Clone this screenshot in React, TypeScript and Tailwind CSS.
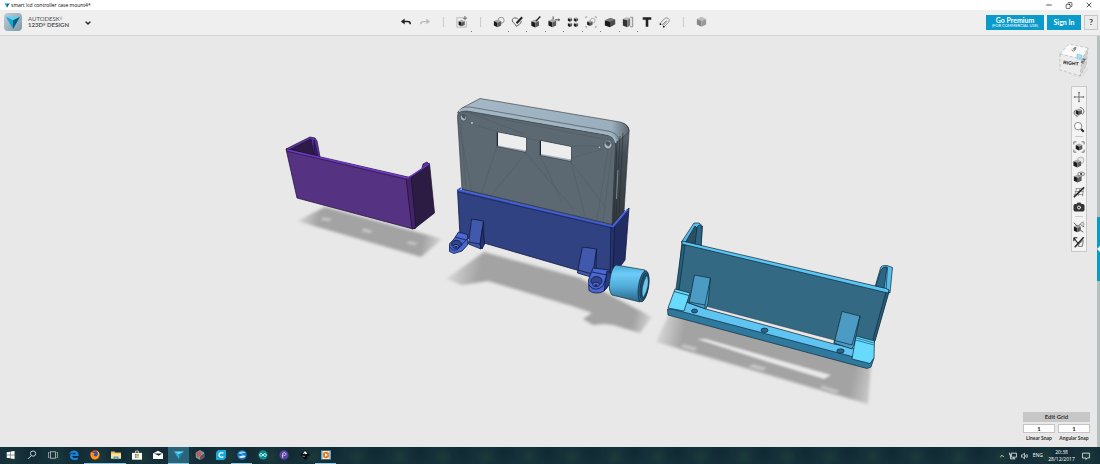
import { useState } from 'react'
import type { ReactNode } from 'react'
import { Camera, ChevronDown, ChevronUp, Copy, Minus, X } from 'lucide-react'

function Logo({ className }: { className: string }) {
  return (
    <svg viewBox="0 0 18 18" className={className}>
      <path d="M1 3 L9 6 L9 17 Z" fill="#1aa3d0" />
      <path d="M17 3 L9 6 L9 17 Z" fill="#075a86" />
      <path d="M1 3 L17 3 L9 7 Z" fill="#5fd0ee" />
    </svg>
  )
}

function Cube({ x = 1, y = 4, s = 1, light = false }: { x?: number; y?: number; s?: number; light?: boolean }) {
  return (
    <g transform={`translate(${x} ${y}) scale(${s})`} stroke="none">
      <path d="M0 2 L4.500 0 L9 2 L4.500 4 Z" fill={light ? '#bdbdbd' : '#aaa'} />
      <path d="M0 2 L4.500 4 L4.500 9.500 L0 7.500 Z" fill={light ? '#858585' : '#1c1c1c'} />
      <path d="M9 2 L4.500 4 L4.500 9.500 L9 7.500 Z" fill={light ? '#999' : '#5c5c5c'} />
    </g>
  )
}

function Icon({ children }: { children: ReactNode }) {
  return (
    <svg viewBox="0 0 14 14" className="h-3 w-3" fill="none" stroke="#222" strokeWidth="1">
      {children}
    </svg>
  )
}

type Tool = { name: string; menu?: boolean; icon?: ReactNode }

const TOOLS: Tool[] = [
  {
    name: 'Undo',
    icon: (
      <Icon>
        <path d="M3 6.500 H9 Q12 6.500 12 9.500" strokeWidth="1.700" />
        <path d="M1 6.500 L5.500 3 V10 Z" fill="#222" stroke="none" />
      </Icon>
    ),
  },
  {
    name: 'Redo',
    icon: (
      <Icon>
        <path d="M11 6.500 H5 Q2 6.500 2 9.500" stroke="#bdbdbd" strokeWidth="1.500" />
        <path d="M13 6.500 L8.500 3 V10 Z" fill="#bdbdbd" stroke="none" />
      </Icon>
    ),
  },
  { name: 'sep' },
  {
    name: 'Transform',
    menu: true,
    icon: (
      <Icon>
        <path d="M8 2 H1 V13 H12 V6" stroke="#999" strokeWidth=".7" />
        <path d="M10.500 0 V5 M8 2.500 H13" stroke="#555" />
        <Cube x={3} y={4.5} s={0.8} />
      </Icon>
    ),
  },
  { name: 'sep' },
  {
    name: 'Primitives',
    menu: true,
    icon: (
      <Icon>
        <circle cx="9.500" cy="5" r="3.500" stroke="#888" />
        <Cube x={1} y={4} s={0.95} />
      </Icon>
    ),
  },
  {
    name: 'Sketch',
    menu: true,
    icon: (
      <Icon>
        <path d="M8 3.500 C4 0 0 4 2 7 C3 8 5 9 6 12 C8 11 12 9 12 6" stroke="#444" />
        <path d="M6.500 8.500 L13 1.500" strokeWidth="2.400" />
      </Icon>
    ),
  },
  {
    name: 'Construct',
    menu: true,
    icon: (
      <Icon>
        <Cube x={1.5} y={4} />
        <path d="M7 6 L12 0.500" strokeWidth="1.600" />
      </Icon>
    ),
  },
  {
    name: 'Modify',
    menu: true,
    icon: (
      <Icon>
        <Cube x={0.5} y={3.5} />
        <path d="M8 4.500 H13.500 M6 0.500 V4 M12 3 L13.500 4.500 L12 6" stroke="#333" />
      </Icon>
    ),
  },
  {
    name: 'Pattern',
    menu: true,
    icon: (
      <Icon>
        <Cube x={1} y={1.5} s={0.55} />
        <Cube x={8} y={1.5} s={0.55} />
        <Cube x={1} y={7.5} s={0.55} />
        <Cube x={8} y={7.5} s={0.55} />
      </Icon>
    ),
  },
  {
    name: 'Grouping',
    menu: true,
    icon: (
      <Icon>
        <path d="M1 2.500 V1 H2.500 M11.500 1 H13 V2.500 M13 11.500 V13 H11.500 M2.500 13 H1 V11.500" stroke="#777" strokeWidth=".8" />
        <circle cx="9" cy="5.500" r="2.800" stroke="#999" strokeWidth=".8" />
        <Cube x={2.5} y={5} s={0.7} />
      </Icon>
    ),
  },
  {
    name: 'Combine',
    menu: true,
    icon: (
      <Icon>
        <path d="M2 4.500 L7.500 2 L13 4 V9 L8 12" fill="#777" stroke="none" />
        <path d="M1 5 L7 7 V13 L1 11 Z" fill="#1c1c1c" stroke="none" />
        <path d="M13 4 L7 7 V13 L13 9.500 Z" fill="#4a4a4a" stroke="none" />
      </Icon>
    ),
  },
  {
    name: 'Measure',
    menu: true,
    icon: (
      <Icon>
        <path d="M9.500 1.500 H12.500 V12.500 H9.500" fill="#e4e4e4" stroke="#666" strokeWidth=".8" />
        <path d="M1 3.500 L5 1.500 L9.500 2 L7 5 Z" fill="#bbb" stroke="none" />
        <path d="M1 3.500 L6 5 V13 L1 11 Z" fill="#333" stroke="none" />
        <path d="M9.500 2.500 L6 5 V13 L9.500 11 Z" fill="#777" stroke="none" />
      </Icon>
    ),
  },
  {
    name: 'Text',
    icon: (
      <Icon>
        <path d="M2 3 H12 M7 3 V12.500" strokeWidth="3" />
      </Icon>
    ),
  },
  {
    name: 'Snap',
    icon: (
      <Icon>
        <path d="M1 9 L6 3.500 C9 0 14 4 11 7.500 L6 12.500 M3.500 10.500 L8 6 C8.500 5 9.500 6 9 6.500 L5 11" stroke="#777" strokeWidth=".9" />
        <circle cx="1.700" cy="9.500" r="1" fill="#111" stroke="none" />
        <circle cx="5.500" cy="12.500" r="1" fill="#111" stroke="none" />
      </Icon>
    ),
  },
  { name: 'sep' },
  { name: 'Material', icon: <Icon><Cube x={1} y={1} s={1.2} light /></Icon> },
]

const NAV: Tool[] = [
  {
    name: 'Pan',
    icon: (
      <Icon>
        <path d="M7 1 V13 M1 7 H13" stroke="#555" strokeWidth=".9" />
        <path d="M6 2 H8 M6 12 H8 M2 6 V8 M12 6 V8" stroke="#444" strokeWidth=".8" />
      </Icon>
    ),
  },
  {
    name: 'Orbit',
    icon: (
      <Icon>
        <Cube x={3.2} y={3} s={0.8} />
        <path d="M3 4.500 C0 8 1 10.500 4.500 11 M11 10 C14 6 13 3 8 1.500 M4 9 L6 11 L4 13" stroke="#555" />
      </Icon>
    ),
  },
  {
    name: 'Zoom',
    icon: (
      <Icon>
        <circle cx="6" cy="6" r="4.300" fill="#fff" stroke="#555" strokeWidth=".8" />
        <path d="M9.500 9.500 L12.500 12.500" strokeWidth="2.400" />
      </Icon>
    ),
  },
  { name: 'sep' },
  {
    name: 'Fit',
    icon: (
      <Icon>
        <path d="M1 4 V1 H4 M10 1 H13 V4 M13 10 V13 H10 M4 13 H1 V10" stroke="#555" strokeWidth=".9" />
        <Cube x={3.2} y={3} s={0.85} />
      </Icon>
    ),
  },
  {
    name: 'Shading',
    icon: (
      <Icon>
        <circle cx="9" cy="5" r="3.800" fill="#e8e8e8" stroke="#999" strokeWidth=".7" />
        <Cube x={0.5} y={4} />
      </Icon>
    ),
  },
  {
    name: 'Visibility',
    icon: (
      <Icon>
        <Cube x={1} y={4} />
        <ellipse cx="9.500" cy="3.500" rx="4" ry="2.300" fill="#eee" stroke="#555" strokeWidth=".8" />
        <circle cx="9.500" cy="3.500" r="1.200" fill="#222" stroke="none" />
      </Icon>
    ),
  },
  {
    name: 'Grid',
    icon: (
      <Icon>
        <path d="M3 3 H13 M2 6.500 H12.500 M1 10 H12 M4 3 L2 12 M8 3 L6 12 M12 3 L11 12" stroke="#777" strokeWidth=".8" />
        <path d="M1 13 L13 1.500" strokeWidth="1.700" />
      </Icon>
    ),
  },
  { name: 'Screenshot', icon: <Camera className="h-3 w-3 fill-[#333] text-[#333] [&>circle]:fill-[#333] [&>circle]:stroke-[#eee]" strokeWidth={2} /> },
  { name: 'sep' },
  {
    name: 'Outlines',
    icon: (
      <Icon>
        <Cube x={1} y={4.500} s={0.9} />
        <path d="M1 2 L5 6 M6 6 L12 1 M10 5 L13 7 M9 11 L12 13" stroke="#444" />
        <circle cx="11" cy="3.500" r="2" fill="#ddd" stroke="#777" strokeWidth=".6" />
      </Icon>
    ),
  },
  {
    name: 'Hide sketches',
    icon: (
      <Icon>
        <path d="M1 2 H5 M1 2 V6 M1 2 L6 9" strokeWidth="1.300" />
        <path d="M6 12 H11 L12 5 L7 9 Z" stroke="#666" />
        <path d="M2 13 L12.500 1.500" strokeWidth="1.700" />
      </Icon>
    ),
  },
]

type App = { name: string; open?: boolean; active?: boolean; icon: ReactNode }

const APPS: App[] = [
  { name: 'Start', icon: <path d="M1 3 L6 2.300 V6.700 H1 Z M6.600 2.200 L12 1.500 V6.700 H6.600 Z M1 7.300 H6 V11.700 L1 11 Z M6.600 7.300 H12 V12.500 L6.600 11.800 Z" fill="#fff" /> },
  { name: 'Search', icon: <g fill="none" stroke="#dce4e6" strokeWidth="1.200"><circle cx="8.500" cy="5" r="3.700" /><path d="M6 8 L1.500 12.500" /></g> },
  { name: 'Task view', icon: <g fill="none" stroke="#cdd6d8" strokeWidth="1"><rect x="3.500" y="2.500" width="7" height="9" /><path d="M2 3.500 H.5 V10.500 H2 M12 3.500 H13.500 V10.500 H12" /></g> },
  { name: 'Edge', icon: <path d="M0 6.500 C1 -1 13 -2 13.500 7 V8.500 H4.500 C5 12 9 12 12.500 10 V13 C7 16 0 13 1.500 7.500 C2.500 5 4 4 6 3.500 C3 4 1 5 0 6.500 Z M4.500 6 H9.500 C9 3 5 3 4.500 6 Z" fill="#1683e0" fillRule="evenodd" /> },
  { name: 'Firefox', open: true, icon: <g><circle cx="7" cy="7" r="6.500" fill="#ed4a1c" /><circle cx="7.500" cy="6.500" r="4.300" fill="#324fb6" /><path d="M1 3 C3 4 5 3 7 5 C4 6 5 9 8 9 C10 9 11 7 11 5 C14 8 12 13 7 13 C2 13 0 8 1 3 Z" fill="#ff9514" /><path d="M9 1 C13 2 14 6 12 9 C12 5 11 3 9 1" fill="#ffd43a" /></g> },
  { name: 'File Explorer', open: true, icon: <g><path d="M0 2 H5 L6 3.500 H14 V12 H0 Z" fill="#e8bd54" /><path d="M0 5 H14 V12 H0 Z" fill="#fbe49a" /><path d="M3.500 9 H10.500 V13 H8.500 V11 H5.500 V13 H3.500 Z" fill="#3f9cd6" /></g> },
  { name: 'Store', icon: <g><path d="M5 4 V1.500 H9 V4" fill="none" stroke="#fff" /><path d="M0 4 H14 V13.500 H0 Z" fill="#fff" /><path d="M4 5.500 H6.500 V8 H4 Z" fill="#e5502c" /><path d="M7.200 5.500 H9.700 V8 H7.200 Z" fill="#76ae28" /><path d="M4 8.700 H6.500 V11.200 H4 Z" fill="#2a9fda" /><path d="M7.200 8.700 H9.700 V11.200 H7.200 Z" fill="#f2b52b" /></g> },
  { name: 'Mail', icon: <g><path d="M0 5 L7 1 L14 5 V12.500 H0 Z" fill="#fff" /><path d="M1.500 5 L13 5 L8 8 Z" fill="#17292f" /></g> },
  { name: '123D Design', open: true, active: true, icon: <g><path d="M0 2 L7 5 V13 Z" fill="#28b0dd" /><path d="M14 2 L7 5 V13 Z" fill="#1284b5" /><path d="M0 2 H14 L7 5.500 Z" fill="#7adbf2" /></g> },
  { name: 'Meshmixer', icon: <g><path d="M7 0 L13 3.500 V10.500 L7 14 L1 10.500 V3.500 Z" fill="#8195a4" /><path d="M2 3 L9 2 L8 8 L3 10 Z" fill="#bb5e50" /><path d="M8 8 L13 5 V10.500 L7 14 Z" fill="#4a5872" /><path d="M7 9 L11 10 L7 14 Z" fill="#ad3937" /></g> },
  { name: 'Cura', icon: <g><path d="M3 0 H14 V11 L11 14 H0 V3 Z" fill="#16a8df" /><path d="M10.500 4 H6 L4.500 5.500 V8.500 L6 10 H10.500" fill="none" stroke="#fff" strokeWidth="2" /></g> },
  { name: 'Slicer', open: true, icon: <g><circle cx="7" cy="7" r="6.800" fill="#1976bd" /><path d="M2 5 C5 1 10 2 12.500 4 L6 5 L9 6.500 Z" fill="#8fd0f5" /><path d="M2 9.500 L9 7.500 L12 8.500 C10 12 5 12 2 9.500 Z" fill="#d4edfb" /></g> },
  { name: 'Arduino', icon: <g><circle cx="7" cy="7" r="6.500" fill="#0a8d91" /><path d="M7 7 C5 3.500 2 5 2.500 7 C3 9.500 5.500 9 7 7 C8.500 4.500 11 4.500 11.500 7 C12 9 9 10.500 7 7 Z" fill="none" stroke="#e5ffff" strokeWidth="1.200" /></g> },
  { name: 'Pronterface', icon: <g><circle cx="7" cy="7" r="6.500" fill="#5844a0" /><path d="M5 11 V6 C5 3 9.500 3 9.500 6 C9.500 8.500 6 8 6 6.500" fill="none" stroke="#e5dcff" strokeWidth="1.300" /></g> },
  { name: 'Inkscape', icon: <g><path d="M7 0.500 L14 7 L10 9 L11 11 L7 13.500 L4 11 L5 9 L0 7 Z" fill="#080b0d" /><path d="M7 1.500 L10.500 5 L8 6 L6.500 5 L3.500 5.500 Z M3 8 L7 8.500 L6 9.500 Z" fill="#f4f4f4" /></g> },
  { name: 'Media player', open: true, icon: <g><rect x="0" y="1" width="14" height="12" fill="#e9edf0" /><path d="M0 1 H2 V13 H0 Z M12 1 H14 V13 H12 Z" fill="#4aa4d2" /><circle cx="7" cy="7" r="4.500" fill="#ee7a17" /><path d="M5.700 4.700 L9.500 7 L5.700 9.300 Z" fill="#fff" /></g> },
]

function ToolButton({ tool }: { tool: Tool }) {
  return (
    <button aria-label={tool.name} className="relative flex h-[18px] w-[18px] items-center justify-center">
      {tool.icon}
      {tool.menu && <span className="absolute -right-px -bottom-px h-px w-px bg-[#777]" />}
    </button>
  )
}

function Scene() {
  return (
    <svg viewBox="0 36 1097 411" className="block w-full" strokeLinejoin="round">
      <defs>
        <filter id="soft" x="-10%" y="-20%" width="120%" height="140%">
          <feGaussianBlur stdDeviation="1.500" />
        </filter>
        <filter id="softer" x="-50%" y="-50%" width="200%" height="200%">
          <feGaussianBlur stdDeviation="1" />
        </filter>
        <linearGradient id="shadowA" gradientUnits="userSpaceOnUse" x1="296" y1="220" x2="444" y2="250">
          <stop offset="0" stopColor="#a3a3a3" stopOpacity=".2" />
          <stop offset=".15" stopColor="#a3a3a3" />
          <stop offset=".85" stopColor="#a3a3a3" />
          <stop offset="1" stopColor="#a3a3a3" stopOpacity=".1" />
        </linearGradient>
        <linearGradient id="shadowB" gradientUnits="userSpaceOnUse" x1="446" y1="275" x2="655" y2="322">
          <stop offset="0" stopColor="#a3a3a3" stopOpacity=".2" />
          <stop offset=".15" stopColor="#a3a3a3" />
          <stop offset=".9" stopColor="#a3a3a3" />
          <stop offset="1" stopColor="#a3a3a3" stopOpacity=".1" />
        </linearGradient>
        <linearGradient id="shadowC" gradientUnits="userSpaceOnUse" x1="655" y1="340" x2="874" y2="385">
          <stop offset="0" stopColor="#a3a3a3" stopOpacity=".2" />
          <stop offset=".12" stopColor="#a3a3a3" />
          <stop offset=".9" stopColor="#a3a3a3" />
          <stop offset="1" stopColor="#a3a3a3" stopOpacity=".4" />
        </linearGradient>
        <linearGradient id="tube" x1="0" y1="0" x2="0" y2="1">
          <stop offset="0" stopColor="#4aa8d6" />
          <stop offset=".25" stopColor="#6dcdf8" />
          <stop offset=".6" stopColor="#4fa9d5" />
          <stop offset="1" stopColor="#2a6585" />
        </linearGradient>
        <linearGradient id="lid" x1="0" y1="0" x2="1" y2="0">
          <stop offset="0" stopColor="#a4b8c7" />
          <stop offset=".9" stopColor="#9aaebd" />
          <stop offset="1" stopColor="#5b6872" />
        </linearGradient>
        <linearGradient id="flank" x1="0" y1="0" x2="0" y2="1">
          <stop offset="0" stopColor="#69767f" />
          <stop offset=".3" stopColor="#444d54" />
          <stop offset="1" stopColor="#33393e" />
        </linearGradient>
      </defs>

      {/* ground shadows */}
      <g filter="url(#soft)">
        <path d="M297 221 L325 207 L442 239 L421 257 Z" fill="url(#shadowA)" />
        <path d="M446 279 L484 252 L580 278 L612 296 L652 317 L640 333 L613 325 L604 324 L593 325 L583 319 L592 313 L572 306 L488 281 L462 285 Z" fill="url(#shadowB)" />
        <path d="M656 342 L670 312 L871 366 L868 404 Z" fill="url(#shadowC)" />
      </g>
      <g fill="#c2c2c2" filter="url(#softer)">
        <path d="M324 217 L332 219 L329 221.500 L320 220 Z M364 228 L373 231 L370 233.500 L361 231 Z M409 241 L418 243 L414 245.500 L406 243 Z" />
        <path d="M684 344 L698 348 L694 351 L680 347 Z M753 364 L767 368 L762 371 L748 367 Z M822 385 L840 391 L835 394 L820 388 Z" />
        <path d="M697 339 L706 339 L831 375 L824 379 L765 361 Z" fill="#e8e8e8" />
      </g>

      {/* purple bracket */}
      <g stroke="#1c0f30" strokeWidth=".7">
        <path d="M286 149 L310 137 L315 138 L317 141 L320 157 L313 156 Z" fill="#5e31a6" />
        <path d="M290 149.500 L311 139 L314 155 Z" fill="#2d1b47" />
        <path d="M314 140 L318 156 L314 155 Z" fill="#3a1d69" />
        <path d="M422 168 L423 164 L427 162 L429 164 Z" fill="#5e31a6" />
        <path d="M409 178 L429.500 163.500 L434.500 213 L414 229 Z" fill="#2c1c43" />
        <path d="M286 149 L408 177 L413 229 L297 198 Z" fill="#563282" />
        <path d="M406 178 L411 176 L416 228 L412 229 Z" fill="#422569" />
        <path d="M287 150 L408 178 L429 164" fill="none" stroke="#6f38cb" strokeWidth="1.500" />
        <path d="M286 151 L407 179.500" fill="none" strokeWidth=".5" />
      </g>

      {/* lcd case */}
      <g stroke="#2c3338" strokeWidth=".6">
        <path d="M609 135 L622 123 Q630 125 629 133 L624 212 L612 226 Z" fill="url(#flank)" />
        <path d="M457.500 113 Q458 111 462 108 L480 98.500 L620 122 Q629 124 629 132 L616 143 L608 136 L466 112 Z" fill="url(#lid)" />
        <path d="M462 190 L457.500 117 Q457 110 467 111 L606 135 Q615 136 615.500 145 L612 226 Z" fill="#5d6972" />
        <path d="M460 109.500 Q464 106 470 107 L608 131 Q618 133 619 140" fill="none" stroke="#4d5962" strokeWidth=".7" />
        <path d="M459 111 Q464 108 471 109.500 L606 133.500 Q615 135 616 143" fill="none" stroke="#a4b6c3" strokeWidth="2" />
        <path d="M620 136 L616 219 M623 133 L619 214 M617 141 L614 222" fill="none" stroke="#252b30" strokeWidth=".6" />
        <path d="M618 170 L616.500 199" stroke="#85929c" strokeWidth=".9" />
        <g fill="none" stroke="#49545c" strokeWidth=".4">
          <path d="M458 120 L472 192 M461 121 L466 190 M466 122 L498 132 M470 113 L524 134 M497 146 L481 195 M526 153 L489 198 M526 153 L574 210 M540 155 L562 202 M571 162 L585 216 M571 162 L606 208 M571 146 L598 146 M571 158 L603 149 M608 150 L597 219 M612 149 L603 222 M526 138 L540 141 M466 112 L603 139" />
        </g>
        <path d="M497 132 L526 137.500 V152.500 L497 146.500 Z M540 140.500 L571 146.500 V161.500 L540 155.500 Z" fill="#9aabb7" />
        <path d="M498 132.500 L526 138 V150.500 L498 145.500 Z M541 141 L571 147 V159.500 L541 154 Z" fill="#ededed" stroke="none" />
        <path d="M497.500 132.500 V146 M540.500 141 V155" stroke="#1f262b" strokeWidth="1" />
        <ellipse cx="463.500" cy="117" rx="3.300" ry="4" fill="#a7b8c3" />
        <path d="M461 115 Q463 112 466 115 L465 119 Q462 118 461 115 Z" fill="#4b555c" stroke="none" />
        <ellipse cx="608" cy="144.500" rx="4" ry="4.500" fill="#a7b8c3" />
        <path d="M605 143 Q607 139 611 143 L609 146 Q607 147 605 143 Z" fill="#4b555c" stroke="none" />
        <circle cx="472" cy="123" r=".9" fill="#c4d0d8" stroke="none" />
        <circle cx="599.500" cy="147.300" r="1.300" fill="#b7c4cd" />
      </g>

      {/* blue holder */}
      <g stroke="#10193f" strokeWidth=".8">
        <path d="M612 227 L629 208 L625 260 L611 279 Z" fill="#202c62" />
        <path d="M457.500 190 L613 226.500 L611 280 L460 236 Z" fill="#304282" />
        <path d="M611 227 L614.500 225 L613 272 L610 277 Z" fill="#28366f" />
        <path d="M461 188 L458 190 L613 226.500 L628 209" fill="none" stroke="#405fe8" strokeWidth="1.700" />
        <path d="M458 192 L612 228" fill="none" strokeWidth=".5" />
        <path d="M462 189 L612 224.500 L625 210" fill="none" stroke="#182457" strokeWidth=".6" />
        <path d="M471.500 219 L483.500 221 L484 244 L481 249 L468.500 244 Z" fill="#4159ad" />
        <path d="M483.500 221 L480 244 L468.500 242 M480 244 L481 249" fill="none" />
        <path d="M482.500 228 L484.500 244 L482 249 L480 245 Z" fill="#253575" />
        <path d="M458.500 232 L467.500 234.500 L467.500 245 L462 251 L454 253.500 L449.500 251.500 L449.500 244 Q451 242 454 239 Z" fill="#4a67d2" />
        <path d="M450 247 Q452 251 457 250 L467 239 M455 237 L466 240" fill="none" />
        <ellipse cx="456.500" cy="244" rx="5" ry="3.700" fill="#31458e" />
        <ellipse cx="456" cy="246.500" rx="3" ry="2" fill="#5370d9" />
        <ellipse cx="456" cy="247" rx="1.600" ry="1" fill="#1d2a5b" stroke="none" />
        <path d="M582.500 247 L596.500 249 L593 273 L591 277 L577.500 273 L578 269 Z" fill="#4159ad" />
        <path d="M578 270 L592 274 M596.500 249 L596 269" fill="none" />
        <path d="M593 268 L609 270 L610 280 Q609 287 603.500 291.500 Q595 295 589 290.500 L588.500 280 Z" fill="#4a67d2" />
        <path d="M592 272 L607 275 L603 286 Q595 293 589 285" fill="none" />
        <path d="M607 271 L611 273 L611 282 L604 291 Z" fill="#293b80" />
        <ellipse cx="596.500" cy="281" rx="5.500" ry="4.500" fill="#31458e" />
        <ellipse cx="596" cy="284.500" rx="3.400" ry="2.300" fill="#5370d9" />
        <ellipse cx="596" cy="285" rx="1.700" ry="1.100" fill="#1d2a5b" stroke="none" />
      </g>

      {/* tube */}
      <g stroke="#123244" strokeWidth=".7">
        <path d="M616 265 L645 270 Q641 283 640 302 L612 295 Q608 291 610 279 Q612 267 616 265 Z" fill="url(#tube)" />
        <ellipse cx="643.500" cy="286.300" rx="5" ry="15.800" transform="rotate(9 643.500 286.300)" fill="#2c6380" />
        <ellipse cx="644.500" cy="286.300" rx="4" ry="13.500" transform="rotate(9 644.500 286.300)" fill="#245670" />
        <ellipse cx="645" cy="286.500" rx="3" ry="11.500" transform="rotate(9 645 286.500)" fill="#2e6685" />
        <path d="M647 276 Q650 286 643 297 Q641 287 647 276 Z" fill="#70c4ec" stroke="none" />
      </g>

      {/* cyan mount */}
      <g stroke="#0d2a3a" strokeWidth=".7">
        <path d="M681.500 242 L694 223 L699 223 L702.500 226 L701 247 Z" fill="#57bde9" />
        <path d="M685.500 242 L695 226 L697 228 L696 245 Z" fill="#2b4f62" />
        <path d="M697 227 Q700 223 702 227 L701 247 L695 245 Z" fill="#2d6685" />
        <path d="M875 287 L880.500 268 Q881 265 887 265.500 L892.500 267.500 L890 293 Z" fill="#57bde9" />
        <path d="M875.500 286.500 L881 270 Q883 266 887 267 L884 289 Z" fill="#2d6685" />
        <path d="M887.500 267 L886 291" stroke="#18313f" />
        <path d="M682 242 L889 290 L874 343 L836 346 L676 301 Z" fill="#336983" />
        <path d="M682 245 L685 245 L679 290 L676 289 Z" fill="#286180" />
        <path d="M889 292 L886 292 L873 339 L875 341 Z" fill="#2a5a74" />
        <path d="M682 241 L886 288.500 L889 290 L888 293 L682 244 Z" fill="#5bc5f4" />
        <path d="M705 306 L834 340 L834 345 L704 309 Z" fill="#eee7e3" strokeWidth=".4" />
        <path d="M668 311 L683 301 L706 309 L834 344 L853 348 L870 363 Z" fill="#5fc4f2" />
        <path d="M667.500 309 L672 309 L869 361 L874 358 L871 367 L867 368.500 L668 315 Z" fill="#30799e" />
        <path d="M675 289 L690 293 L684 311 L668 308 Z" fill="#67dafe" />
        <path d="M674 291.500 L689 295.500" />
        <path d="M856 336 L874.500 341 L874 358 L870 363.500 L852 359 Z" fill="#67dafe" />
        <path d="M856 338 L874 343 M855.500 340 L874 345" stroke="#155779" />
        <path d="M694.500 275 L710.500 278 L708 303 L706 309 L689 303 Z" fill="#4c9bc4" />
        <path d="M689 302 L705 305 L710.500 278 M705 305 V308" fill="none" />
        <path d="M842 311.500 L860 316 L854 345 L852 349 L834 343 L835 340 Z" fill="#4c9bc4" />
        <path d="M834.500 340.500 L852 345 L860 316" fill="none" />
        <ellipse cx="694.500" cy="311" rx="3" ry="2" fill="#2a678a" />
        <ellipse cx="764.500" cy="330.300" rx="3.500" ry="2.200" fill="#2a678a" />
        <ellipse cx="840.500" cy="351" rx="3.700" ry="2.200" fill="#2a678a" />
      </g>
    </svg>
  )
}

function ViewCube() {
  return (
    <svg viewBox="0 0 34 36" className="h-9 w-[34px]" fontFamily="'Liberation Sans', sans-serif" fontWeight="bold">
      <path d="M4 30 L24 35 L31 26 L32 28 L25 36 Z" fill="#ddd" />
      <path d="M4 12 L13 2 L32 6 L26 17 Z" fill="#fafafa" />
      <path d="M4 12 L26 17 L24 34 L4 28 Z" fill="#ececec" />
      <path d="M26 17 L32 6 L30 24 L24 34 Z" fill="#d2d2d2" />
      <path d="M4 12 L13 2 L32 6 L26 17 Z M4 12 L4 28 L24 34 L30 24 L32 6 M26 17 L24 34" fill="none" stroke="#b5b5b5" strokeWidth=".7" strokeDasharray="3 2" />
      <path d="M21 12 L26 13 V18 L21 17 Z" fill="#a8dcf0" stroke="#7fc2dd" strokeWidth=".5" />
      <text x="7" y="22" fontSize="5" fill="#222" transform="rotate(6 7 22)">RIGHT</text>
      <text x="17" y="10" fontSize="4" fill="#222" transform="rotate(-40 17 10)">UP</text>
      <text x="27" y="22" fontSize="4" fill="#444" transform="rotate(-60 27 22)">BA</text>
    </svg>
  )
}

function SnapField({ id, label }: { id: string; label: string }) {
  const [value, setValue] = useState('1')
  return (
    <div className="flex flex-1 flex-col items-center gap-[2px]">
      <input
        id={id}
        value={value}
        onChange={(e) => setValue(e.target.value)}
        className="h-[9px] w-full border border-[#c4c4c4] bg-white text-center text-[6px] leading-[7px] font-bold text-[#222]"
      />
      <label htmlFor={id} className="text-[5px] leading-[7px] font-bold whitespace-nowrap text-[#333]">{label}</label>
    </div>
  )
}

export default function App() {
  return (
    <div className="flex min-h-screen flex-col bg-[#e8e8e8] font-['Open_Sans',sans-serif] text-[#333]">
      <header className="flex h-[10px] items-center bg-white pl-1">
        <Logo className="mr-[1px] h-[6px] w-[6px]" />
        <h1 className="flex-1 text-[5px] leading-[10px] text-black">smart lcd controller case mount4*</h1>
        <div className="flex gap-3 pr-[7px]">
          <button aria-label="Minimize"><Minus className="h-2 w-2 text-black" /></button>
          <button aria-label="Restore"><Copy className="h-[7px] w-2 -scale-x-100 text-black" /></button>
          <button aria-label="Close"><X className="h-2 w-2 text-black" /></button>
        </div>
      </header>

      <div className="flex h-[26px] items-center border-b border-[#d2d2d2] bg-[#efefef] pb-px">
        <div className="flex w-[397px] shrink-0 items-center pl-1">
          <span className="flex h-[18px] w-[18px] items-center justify-center rounded bg-linear-to-br from-[#c2ced4] to-[#7d9aa8]">
            <Logo className="h-4 w-4" />
          </span>
          <div className="ml-[6px] w-[45px] font-['Lato',sans-serif] text-[6px] leading-[6px] text-[#555]">
            <div>AUTODESK<sup className="text-[3px]">®</sup></div>
            <div className="font-bold">123D<sup className="text-[3px]">®</sup> DESIGN</div>
          </div>
          <button aria-label="Main menu" className="ml-[11px] pt-[2px]"><ChevronDown className="h-2 w-2 text-[#222]" strokeWidth={4} /></button>
        </div>
        <nav className="flex w-[314px] shrink-0 justify-between">
          {TOOLS.map((tool, i) =>
            tool.name === 'sep' ? (
              <span key={i} className="flex w-[18px] items-center justify-center"><span className="h-[10px] w-px bg-[#ccc]" /></span>
            ) : (
              <ToolButton key={i} tool={tool} />
            )
          )}
        </nav>
        <div className="ml-auto flex gap-[3px] pr-[2px] font-['Lato',sans-serif] font-bold text-white">
          <button className="flex h-[15px] w-[58px] flex-col items-center justify-center bg-[#0a9bcb]">
            <span className="text-[7px] leading-[8px]">Go Premium</span>
            <span className="text-[4px] leading-[4px] font-normal whitespace-nowrap">(FOR COMMERCIAL USE)</span>
          </button>
          <button className="h-[15px] w-[34px] bg-[#0a9bcb] text-[7px] leading-[15px]">Sign In</button>
          <button aria-label="Help" className="h-[15px] w-[14px] border border-[#c6c6c6] bg-[#ececec] text-[8px] leading-[13px] text-[#333]">?</button>
        </div>
      </div>

      <main className="relative flex flex-1">
        <div className="min-w-0 flex-1">
          <Scene />
        </div>
        <aside className="flex w-[3px] flex-col bg-[#b5c1be] pt-[181px]">
          <button aria-label="Open parts panel" className="flex h-16 items-center bg-[#0a9bcb]">
            <svg viewBox="0 0 3 6" className="h-[6px] w-[3px]"><path d="M3 0 L0 3 L3 6 Z" fill="#fff" /></svg>
          </button>
        </aside>

        {/* overlays on the canvas */}
        <div className="absolute top-[6px] right-[10px]">
          <ViewCube />
        </div>
        <div className="absolute top-[50px] right-[13px] flex w-4 flex-col items-center border border-[#c9c9c9] bg-[#f3f3f3] py-[2px]">
          {NAV.map((tool, i) =>
            tool.name === 'sep' ? (
              <span key={i} className="my-[2px] h-px w-2 bg-[#ccc]" />
            ) : (
              <button key={i} aria-label={tool.name} className="flex h-[15px] w-full items-center justify-center">{tool.icon}</button>
            )
          )}
        </div>
        <div className="absolute right-[10px] bottom-[5px] w-[67px] font-['Lato',sans-serif]">
          <button className="mb-[2px] block h-[10px] w-full bg-[#c7c7c7] text-[6px] leading-[10px] font-bold text-[#333]">Edit Grid</button>
          <div className="flex gap-[3px]">
            <SnapField id="linear" label="Linear Snap" />
            <SnapField id="angular" label="Angular Snap" />
          </div>
        </div>
      </main>

      <footer className="flex h-[17px] justify-between bg-[#16303a] bg-[radial-gradient(circle_at_30%_60%,#1b3b39_0,transparent_30%),radial-gradient(circle_at_75%_30%,#102933_0,transparent_40%)] bg-[size:43px_17px] text-white">
        <div className="flex">
          {APPS.map((app) => (
            <button
              key={app.name}
              aria-label={app.name}
              className={`flex w-[21px] items-center justify-center border-b ${app.open ? 'border-[#83c6e6]' : 'border-transparent'} ${app.active ? 'bg-[#2b6478]' : ''}`}
            >
              <svg viewBox="0 0 14 14" className="h-[10px] w-[10px]">{app.icon}</svg>
            </button>
          ))}
        </div>
        <div className="flex items-center gap-1 pr-[10px] text-[5px]">
          <ChevronUp className="h-[6px] w-[6px]" strokeWidth={3} />
          <svg viewBox="0 0 14 14" className="h-2 w-2" fill="none" stroke="#fff" strokeWidth="1.300"><path d="M4 2 H13 V9 H4 Z M6 12 H11 M8.500 9 V12 M1 1 V5 H4 M2.500 5 V12 H6" /></svg>
          <svg viewBox="0 0 14 14" className="h-2 w-2" fill="none" stroke="#fff" strokeWidth="1.200"><path d="M1 5 H3 L6 2 V12 L3 9 H1 Z M8 5 Q9.500 7 8 9 M10 3.500 Q12.500 7 10 10.500" /></svg>
          <span>ENG</span>
          <time className="w-[29px] text-center leading-[7px]">
            20:38<br />28/12/2017
          </time>
          <svg viewBox="0 0 14 14" className="ml-[2px] h-2 w-2" fill="none" stroke="#fff" strokeWidth="1.300"><path d="M1 2 H13 V10.500 H9 L7 13 V10.500 H1 Z" /></svg>
        </div>
      </footer>
    </div>
  )
}
